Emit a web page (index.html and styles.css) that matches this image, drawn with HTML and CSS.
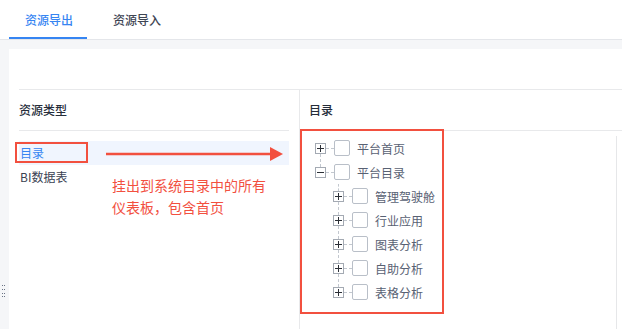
FILE: index.html
```html
<!DOCTYPE html>
<html lang="zh">
<head>
<meta charset="utf-8">
<link rel="stylesheet" href="styles.css">
</head>
<body>
<div class="tabs">
  <div class="tab active">资源导出</div>
  <div class="tab">资源导入</div>
</div>
<div class="main">
  <div class="panel">
    <div class="columns">
      <div class="col col-left">
        <div class="col-head">资源类型</div>
        <ul class="type-list">
          <li class="type-item selected">目录</li>
          <li class="type-item">BI数据表</li>
        </ul>
      </div>
      <div class="col col-right">
        <div class="col-head">目录</div>
        <div class="tree">
          <div class="node"><span class="exp plus"></span><span class="conn"></span><span class="check"></span><span class="label">平台首页</span></div>
          <div class="node has-prev"><span class="exp minus"></span><span class="conn"></span><span class="check"></span><span class="label">平台目录</span></div>
          <div class="node child first"><span class="exp plus"></span><span class="conn"></span><span class="check"></span><span class="label">管理驾驶舱</span></div>
          <div class="node child has-prev"><span class="exp plus"></span><span class="conn"></span><span class="check"></span><span class="label">行业应用</span></div>
          <div class="node child has-prev"><span class="exp plus"></span><span class="conn"></span><span class="check"></span><span class="label">图表分析</span></div>
          <div class="node child has-prev"><span class="exp plus"></span><span class="conn"></span><span class="check"></span><span class="label">自助分析</span></div>
          <div class="node child has-prev"><span class="exp plus"></span><span class="conn"></span><span class="check"></span><span class="label">表格分析</span></div>
        </div>
      </div>
    </div>
  </div>
</div>

<svg class="handle" width="6" height="14" viewBox="0 0 6 14">
  <g fill="#6a7384">
    <rect x="2" y="1" width="1" height="1"/><rect x="4" y="1" width="1" height="1"/>
    <rect x="2" y="5" width="1" height="1"/><rect x="4" y="5" width="1" height="1"/>
    <rect x="2" y="9" width="1" height="1"/><rect x="4" y="9" width="1" height="1"/>
    <rect x="2" y="12" width="1" height="1"/><rect x="4" y="12" width="1" height="1"/>
  </g>
</svg>

<div class="mark mark-dir"></div>
<div class="mark mark-tree"></div>
<svg class="arrow" width="190" height="20" viewBox="0 0 190 20">
  <line x1="6" y1="10" x2="172" y2="10" stroke="#f2503f" stroke-width="2.5"/>
  <polygon points="170,3 183,10 170,17" fill="#f2503f"/>
</svg>
<div class="note">挂出到系统目录中的所有<br>仪表板，包含首页</div>
</body>
</html>
```

FILE: styles.css
```css
* { box-sizing: border-box; }
html, body {
  margin: 0;
  padding: 0;
}
body {
  width: 622px;
  height: 329px;
  overflow: hidden;
  background: #f5f6f8;
  font-family: "Noto Sans CJK SC", "Noto Sans", sans-serif;
  font-size: 12px;
  color: #3a4252;
  position: relative;
}
.tabs {
  height: 40px;
  background: #fff;
  border-bottom: 1px solid #e4e6ea;
  display: flex;
  padding-left: 9px;
  gap: 10px;
}
.tab {
  height: 39px;
  line-height: 39px;
  padding: 0 14px 0 16px;
  font-weight: 500;
  color: #3e4553;
  border-bottom: 2px solid transparent;
}
.tab.active {
  color: #3685f2;
  border-bottom-color: #3685f2;
}
.main {
  padding: 9px 0 0 9px;
  height: 289px;
}
.panel {
  background: #fff;
  height: 280px;
  padding: 40px 0 0 10px;
  display: flex;
  flex-direction: column;
}
.columns {
  flex: 1;
  display: flex;
  border-top: 1px solid #e8e9eb;
}
.col-left {
  width: 281px;
  padding-right: 10px;
  border-right: 1px solid #e8e9eb;
}
.col-right {
  flex: 1;
  display: flex;
  flex-direction: column;
}
.col-head {
  height: 41px;
  line-height: 40px;
  border-bottom: 1px solid #e8e9eb;
  font-weight: 500;
  color: #262d3a;
}
.col-right .col-head { padding-left: 9px; }
.type-list {
  list-style: none;
  margin: 0;
  padding: 10px 0 0;
}
.type-item {
  height: 24px;
  line-height: 24px;
  padding-left: 1px;
  color: #3a4252;
}
.type-item.selected {
  background: #f0f5fe;
  color: #3685f2;
}
.tree {
  flex: 1;
  margin: 5px 5px 0 0;
  border-right: 1px solid #e6e7e9;
}
.node {
  display: flex;
  align-items: center;
  height: 24px;
  padding-left: 15px;
}
.node.child { padding-left: 33px; }
.exp {
  width: 11px;
  height: 11px;
  border: 1px solid #a4aab3;
  position: relative;
  flex: none;
}
.exp::after {
  content: "";
  position: absolute;
  left: 1px;
  top: 4px;
  width: 7px;
  height: 1px;
  background: #2b2f36;
}
.exp.plus::before {
  content: "";
  position: absolute;
  left: 4px;
  top: 1px;
  width: 1px;
  height: 7px;
  background: #2b2f36;
}
.node.has-prev .conn::before,
.node.first .conn::before {
  content: "";
  position: absolute;
  left: -6px;
  bottom: 6px;
  height: 13px;
  border-left: 1px dashed #c3c8cf;
}
.node.first .conn::before { height: 7px; }
.conn {
  position: relative;
  width: 8px;
  height: 0;
  border-top: 1px dashed #c3c8cf;
  flex: none;
}
.check {
  width: 16px;
  height: 16px;
  border: 1px solid #b9bfc8;
  border-radius: 2px;
  background: #fff;
  flex: none;
}
.label {
  margin-left: 7px;
  color: #586173;
}
.handle {
  position: absolute;
  left: 0;
  top: 284px;
}
.mark {
  position: absolute;
  border: 2px solid #f2503f;
}
.mark-dir {
  left: 15px;
  top: 142px;
  width: 73px;
  height: 21px;
}
.mark-tree {
  left: 300px;
  top: 129px;
  width: 144px;
  height: 185px;
}
.arrow {
  position: absolute;
  left: 100px;
  top: 144px;
}
.note {
  position: absolute;
  left: 112px;
  top: 174px;
  font-size: 14px;
  line-height: 22px;
  color: #f2503f;
}
```
